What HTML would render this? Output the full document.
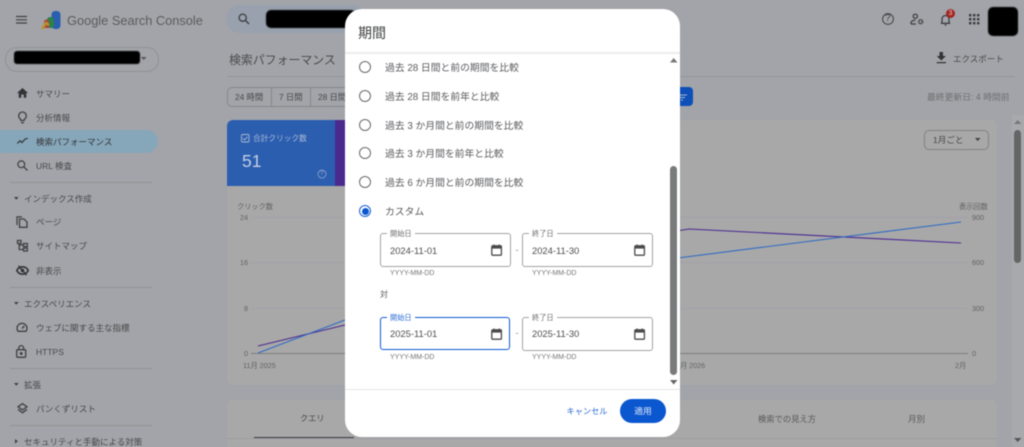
<!DOCTYPE html>
<html lang="ja"><head><meta charset="utf-8"><title>期間</title>
<style>
html,body{margin:0;padding:0;background:#a2a4a9}
#r{position:relative;width:1024px;height:447px;overflow:hidden;background:#a2a4a9;font-family:"Liberation Sans","Noto Sans CJK JP",sans-serif;color:#464749;filter:blur(.45px)}
.a{position:absolute;white-space:nowrap}
.t{position:absolute;white-space:nowrap;line-height:14px;height:14px;font-size:8.5px;color:#47484a;margin-top:.5px}
.blk{position:absolute;background:#000;filter:blur(.6px)}
.dv{position:absolute;left:10px;width:142px;height:1px;background:#8f9195}
svg{position:absolute;overflow:visible}
.ic{fill:none;stroke:#3f4042;stroke-width:1.3}
.rad{position:absolute;left:359px;width:10px;height:10px;border:1.4px solid #6a6a6a;border-radius:50%}
.lab{position:absolute;left:385px;font-size:9.8px;line-height:14px;color:#5a5b5e;white-space:nowrap;margin-top:2px}
.fld{position:absolute;width:129px;height:32px;border:1px solid #a2a3a5;border-radius:3px}
.fl{position:absolute;font-size:7.2px;line-height:9px;color:#6b6c6e;background:#fff;padding:0 3px;white-space:nowrap}
.val{position:absolute;font-size:9.4px;line-height:14px;color:#4c4d4f}
.hint{position:absolute;font-size:7px;line-height:9px;color:#737477}
.ax{position:absolute;white-space:nowrap;font-size:7.2px;line-height:10px;color:#616265;margin-top:.5px}
</style></head><body><div id="r">

<!-- top bar -->
<svg style="left:16px;top:15px" width="12" height="10"><path d="M0 1.5H11M0 4.8H11M0 8H11" stroke="#3f4042" stroke-width="1.2" fill="none"/></svg>
<svg style="left:41px;top:10px" width="20" height="20" viewBox="0 0 20 20">
<rect x="10.5" y="1" width="9" height="18" rx="3.5" fill="#2a5fb0"/>
<rect x="6" y="7" width="7" height="11" rx="3" fill="#2c8048"/>
<path d="M3 12a2.5 2.5 0 0 1 5 0v6H3z" fill="#a9453a"/>
<path d="M1 19 L5 13 L8 15" stroke="#b8942c" stroke-width="2.5" fill="none"/>
</svg>
<div class="a" style="left:67px;top:12px;font-size:12.8px;line-height:18px;color:#5b5c5f">Google Search Console</div>
<div class="a" style="left:226px;top:5px;width:140px;height:28px;border-radius:14px;background:#98a1ad"></div>
<svg style="left:238px;top:13px" width="12" height="12"><circle cx="4.7" cy="4.7" r="3.6" fill="none" stroke="#3f4042" stroke-width="1.3"/><path d="M7.5 7.5L11 11" stroke="#3f4042" stroke-width="1.4"/></svg>
<div class="blk" style="left:266px;top:10px;width:90px;height:18px;border-radius:5px"></div>

<svg style="left:882px;top:13px" width="12" height="12"><circle cx="6" cy="6" r="5.4" fill="none" stroke="#3f4042" stroke-width="1"/></svg>
<div class="a" style="left:885px;top:14px;font-size:10px;line-height:10px;color:#3f4042">?</div>
<svg style="left:910px;top:13px" width="14" height="13" class="ic" viewBox="0 0 14 13"><circle cx="5.3" cy="3.2" r="2.1"/><path d="M1 11v-1.2c0-1.6 2-2.6 4.3-2.6"/><path d="M1 11h5"/><circle cx="10.6" cy="8.7" r="1.9" stroke-width="1.7" stroke-dasharray="1.3 .5"/></svg>
<svg style="left:940px;top:13px" width="12" height="13" class="ic" viewBox="0 0 12 13"><path d="M.8 10.3h9.4M2 10.3V6a3.5 3.5 0 0 1 7 0v4.3M4.5 12h2"/></svg>
<div class="a" style="left:946px;top:9px;width:9px;height:9px;border-radius:50%;background:#a3241f;color:#e8c8c6;font-size:7px;line-height:9px;text-align:center">3</div>
<svg style="left:969px;top:14px" width="11" height="11" fill="#3a3b3d"><rect x="0" y="0" width="2.4" height="2.4"/><rect x="4" y="0" width="2.4" height="2.4"/><rect x="8" y="0" width="2.4" height="2.4"/><rect x="0" y="4" width="2.4" height="2.4"/><rect x="4" y="4" width="2.4" height="2.4"/><rect x="8" y="4" width="2.4" height="2.4"/><rect x="0" y="8" width="2.4" height="2.4"/><rect x="4" y="8" width="2.4" height="2.4"/><rect x="8" y="8" width="2.4" height="2.4"/></svg>
<div class="blk" style="left:988px;top:7px;width:30px;height:29px;border-radius:5px"></div>

<!-- sidebar -->
<div class="a" style="left:5px;top:47px;width:152px;height:23px;border:1px solid #8f9195;border-radius:12px"></div>
<div class="blk" style="left:14px;top:51px;width:126px;height:13px;border-radius:3px"></div>
<svg style="left:141px;top:57px" width="6" height="4"><path d="M0 0H5.5L2.7 3z" fill="#55565a"/></svg>
<div class="a" style="left:0;top:130px;width:158px;height:23px;background:#86a6ba;border-radius:0 12px 12px 0"></div>

<svg style="left:17px;top:88px" width="11" height="10"><path d="M5.5 0L11 5H9.3V9.7H6.7V6.5H4.3V9.7H1.7V5H0z" fill="#333436"/></svg>
<svg style="left:18px;top:111px" width="9" height="13" class="ic" viewBox="0 0 9 13"><path d="M2.8 8.5C1.5 7.6.7 6.3.7 4.8a3.8 3.8 0 0 1 7.6 0c0 1.5-.8 2.8-2.1 3.7V9.5H2.8z"/><path d="M3 11.7h3"/></svg>
<svg style="left:17px;top:138px" width="11" height="6" viewBox="0 0 11 6"><path d="M.3 5.5L3 2.8l2 1.7 3-3.4 2.8-.8" fill="none" stroke="#333436" stroke-width="1.2"/></svg>
<svg style="left:17px;top:160px" width="11" height="11"><circle cx="4.3" cy="4.3" r="3.4" fill="none" stroke="#3f4042" stroke-width="1.2"/><path d="M6.8 6.8L10.5 10.5" stroke="#3f4042" stroke-width="1.3"/></svg>
<svg style="left:16px;top:216px" width="12" height="12" class="ic" viewBox="0 0 12 12"><path d="M1 9V.9h5M3.5 11.3V3H8l3 3v5.3z"/></svg>
<svg style="left:17px;top:240px" width="11" height="12" class="ic" viewBox="0 0 11 12" stroke-width="1"><rect x=".5" y=".5" width="3.5" height="3"/><rect x="6.5" y="3.5" width="3.8" height="3"/><rect x="6.5" y="8" width="3.8" height="3"/><path d="M2.2 3.5V9.5H6.5M2.2 5H6.5"/></svg>
<svg style="left:16px;top:265px" width="13" height="11" viewBox="0 0 13 11"><path d="M.8 5.5C2 3 4 1.8 6.5 1.8S11 3 12.2 5.5C11 8 9 9.2 6.5 9.2S2 8 .8 5.5z" fill="none" stroke="#333436" stroke-width="1.6"/><circle cx="6.5" cy="5.5" r="1.8" fill="#333436"/><path d="M2.5 .8L10.5 10.2" stroke="#333436" stroke-width="1.3"/></svg>
<svg style="left:16px;top:322px" width="12" height="10" class="ic" viewBox="0 0 12 10" stroke-width="1.1"><path d="M2 9.3a5 5 0 1 1 8 0z"/><path d="M6 6.5L8.3 4" stroke-width="1.3"/></svg>
<svg style="left:16px;top:345px" width="11" height="13" class="ic" viewBox="0 0 11 13" stroke-width="1.2"><rect x=".7" y="4.7" width="9" height="7.6" rx="1"/><path d="M2.8 4.7V3a2.4 2.4 0 0 1 4.8 0v1.7"/><circle cx="5.2" cy="8.5" r=".8" fill="#3f4042"/></svg>
<svg style="left:17px;top:403px" width="11" height="11" class="ic" viewBox="0 0 11 11" stroke-width="1"><path d="M5.5 .7L10 3.8 5.5 6.9 1 3.8z"/><path d="M1 6.3L5.5 9.8 10 6.3"/></svg>

<div class="t" style="left:36px;top:86px">サマリー</div>
<div class="t" style="left:36px;top:110px">分析情報</div>
<div class="t" style="left:36px;top:134px;color:#333">検索パフォーマンス</div>
<div class="t" style="left:36px;top:158px">URL 検査</div>
<div class="dv" style="top:182px"></div>
<svg style="left:14px;top:197px" width="5" height="3"><path d="M0 0H4.6L2.3 2.8z" fill="#3f4042"/></svg>
<div class="t" style="left:24px;top:191px">インデックス作成</div>
<div class="t" style="left:36px;top:214px">ページ</div>
<div class="t" style="left:36px;top:238px">サイトマップ</div>
<div class="t" style="left:36px;top:263px">非表示</div>
<div class="dv" style="top:287px"></div>
<svg style="left:14px;top:302px" width="5" height="3"><path d="M0 0H4.6L2.3 2.8z" fill="#3f4042"/></svg>
<div class="t" style="left:24px;top:296px">エクスペリエンス</div>
<div class="t" style="left:36px;top:320px">ウェブに関する主な指標</div>
<div class="t" style="left:36px;top:344px">HTTPS</div>
<div class="dv" style="top:368px"></div>
<svg style="left:14px;top:383px" width="5" height="3"><path d="M0 0H4.6L2.3 2.8z" fill="#3f4042"/></svg>
<div class="t" style="left:24px;top:377px">拡張</div>
<div class="t" style="left:36px;top:401px">パンくずリスト</div>
<div class="dv" style="top:425px"></div>
<svg style="left:15px;top:439px" width="3" height="5"><path d="M0 0V4.6L2.8 2.3z" fill="#3f4042"/></svg>
<div class="t" style="left:24px;top:434px">セキュリティと手動による対策</div>

<!-- main header -->
<div class="a" style="left:229px;top:51px;font-size:11.9px;line-height:18px;color:#4a4b4d">検索パフォーマンス</div>
<div class="a" style="left:227px;top:76px;width:788px;height:1px;background:#939599"></div>
<svg style="left:936px;top:52px" width="11" height="12"><path d="M3.5 0H7V4H10L5.3 8.5.7 4H3.5zM.7 10H10V11.3H.7z" fill="#333436"/></svg>
<div class="t" style="left:953px;top:51.5px">エクスポート</div>
<div class="a" style="left:227px;top:87px;width:130px;height:18px;border:1px solid #85878b;border-radius:5px"></div>
<div class="a" style="left:271px;top:87px;width:1px;height:20px;background:#85878b"></div>
<div class="a" style="left:310px;top:87px;width:1px;height:20px;background:#85878b"></div>
<div class="t" style="left:235px;top:89.5px;font-size:8.3px">24 時間</div>
<div class="t" style="left:279px;top:89.5px;font-size:8.3px">7 日間</div>
<div class="t" style="left:318px;top:89.5px;font-size:8.3px">28 日間</div>
<div class="a" style="left:660px;top:87px;width:33px;height:19px;background:#0e50b8;border-radius:4px"></div>
<svg style="left:680px;top:92px" width="9" height="9"><path d="M0 3H7M0 5.5H5M1 8H3" stroke="#a8b6cc" stroke-width="1"/></svg>
<div class="a" style="left:927px;top:90px;font-size:8.8px;line-height:14px;color:#6e6f72">最終更新日: 4 時間前</div>

<!-- chart card -->
<div class="a" style="left:227px;top:120px;width:770px;height:265px;background:#a8a8a8;border-radius:6px"></div>
<div class="a" style="left:227px;top:120px;width:108px;height:66px;background:#2c5eb0;border-radius:6px 0 0 0"></div>
<div class="a" style="left:335px;top:120px;width:30px;height:66px;background:#4a2a8c"></div>
<svg style="left:241px;top:134px" width="9" height="9"><rect x=".5" y=".5" width="7.5" height="7.5" rx="1" fill="none" stroke="#a9bad6" stroke-width=".9"/><path d="M2 4.3L3.7 6 6.5 2.7" fill="none" stroke="#a9bad6" stroke-width=".9"/></svg>
<div class="a" style="left:253px;top:133px;font-size:7.7px;line-height:12px;color:#a9bad6">合計クリック数</div>
<div class="a" style="left:242px;top:150px;font-size:17.5px;line-height:22px;color:#c2cfe4">51</div>
<svg style="left:317px;top:169px" width="10" height="10"><circle cx="5" cy="5" r="4" fill="none" stroke="#8da4c9" stroke-width=".8"/></svg>
<div class="a" style="left:320px;top:170px;font-size:6.5px;line-height:8px;color:#8da4c9">?</div>

<div class="a" style="left:924px;top:130px;width:63px;height:18px;border:1px solid #808285;border-radius:5px"></div>
<div class="a" style="left:933px;top:134px;font-size:8.6px;line-height:13px;color:#47484a">1月ごと</div>
<svg style="left:975px;top:138px" width="6" height="4"><path d="M0 0H5.5L2.7 3z" fill="#3f4042"/></svg>

<svg style="left:0;top:0" width="1024" height="447">
<path d="M251 217.5H968M251 262.5H968M251 308.5H968" stroke="#a1a2a9" stroke-width="1" fill="none"/>
<path d="M251 353.5H968" stroke="#7d7e80" stroke-width="1"/>
<path d="M258 346L345 325" stroke="#4b2a92" stroke-width="1.1" fill="none"/>
<path d="M258 353L345 320" stroke="#2f6bc4" stroke-width="1.1" fill="none"/>
<path d="M670 232L689 229L961 243" stroke="#4b2a92" stroke-width="1.1" fill="none"/>
<path d="M670 259L961 222" stroke="#2f6bc4" stroke-width="1.1" fill="none"/>
</svg>
<div class="ax" style="left:237px;top:201px">クリック数</div>
<div class="ax" style="left:240px;top:212px">24</div>
<div class="ax" style="left:240px;top:257px">16</div>
<div class="ax" style="left:244px;top:303px">8</div>
<div class="ax" style="left:244px;top:348px">0</div>
<div class="ax" style="left:243px;top:360px">11月 2025</div>
<div class="ax" style="left:959px;top:201px">表示回数</div>
<div class="ax" style="left:972px;top:212px">900</div>
<div class="ax" style="left:972px;top:257px">600</div>
<div class="ax" style="left:972px;top:303px">300</div>
<div class="ax" style="left:972px;top:348px">0</div>
<div class="ax" style="left:680px;top:360px">月 2026</div>
<div class="ax" style="left:955px;top:360px">2月</div>

<!-- table card -->
<div class="a" style="left:227px;top:400px;width:770px;height:60px;background:#a8a8a8;border-radius:6px"></div>
<div class="a" style="left:227px;top:438px;width:770px;height:1px;background:#9c9da3"></div>
<div class="a" style="left:254px;top:436.5px;width:100px;height:1.5px;background:#3a3b3d"></div>
<div class="t" style="left:300px;top:411px;font-size:8.2px">クエリ</div>
<div class="t" style="left:758px;top:411px;font-size:8.3px;color:#58595b">検索での見え方</div>
<div class="t" style="left:908px;top:411px;font-size:8.5px;color:#58595b">月別</div>

<!-- page scrollbar -->
<div class="a" style="left:1012px;top:115px;width:12px;height:332px;background:#a8a9ac"></div>
<svg style="left:1014px;top:120px" width="8" height="5"><path d="M0 4H7.5L3.7 0z" fill="#777"/></svg>
<div class="a" style="left:1014px;top:130px;width:7px;height:133px;background:#646566;border-radius:3.5px"></div>
<svg style="left:1014px;top:438px" width="8" height="5"><path d="M0 0H7.5L3.7 4z" fill="#555"/></svg>

<!-- dialog -->
<div class="a" style="left:345px;top:9px;width:335px;height:428px;background:#fff;border-radius:17px"></div>
<div class="a" style="left:358px;top:23px;font-size:14px;line-height:20px;color:#3f4042">期間</div>
<div class="a" style="left:345px;top:52px;width:335px;height:1.5px;background:#ececec"></div>
<div class="a" style="left:345px;top:389px;width:335px;height:1px;background:#e6e6e6"></div>

<div class="rad" style="top:61px"></div>
<div class="rad" style="top:90px"></div>
<div class="rad" style="top:119px"></div>
<div class="rad" style="top:147px"></div>
<div class="rad" style="top:176px"></div>
<div class="rad" style="top:205px;border-color:#1a5fd0"></div>
<div class="a" style="left:361.6px;top:207.6px;width:7.6px;height:7.6px;border-radius:50%;background:#0b57d0"></div>
<div class="lab" style="top:60px">過去 28 日間と前の期間を比較</div>
<div class="lab" style="top:89px">過去 28 日間を前年と比較</div>
<div class="lab" style="top:118px">過去 3 か月間と前の期間を比較</div>
<div class="lab" style="top:146px">過去 3 か月間を前年と比較</div>
<div class="lab" style="top:175px">過去 6 か月間と前の期間を比較</div>
<div class="lab" style="top:204px">カスタム</div>

<div class="fld" style="left:380px;top:233px"></div>
<div class="fl" style="left:387px;top:229px">開始日</div>
<div class="val" style="left:390px;top:243.5px">2024-11-01</div>
<div class="fld" style="left:522px;top:233px"></div>
<div class="fl" style="left:529px;top:229px">終了日</div>
<div class="val" style="left:532px;top:243.5px">2024-11-30</div>
<div class="hint" style="left:390px;top:269px">YYYY-MM-DD</div>
<div class="hint" style="left:532px;top:269px">YYYY-MM-DD</div>
<div class="a" style="left:515.5px;top:243px;font-size:9px;line-height:14px;color:#8a8a8a">-</div>

<div class="a" style="left:380px;top:289px;font-size:8px;line-height:11px;color:#5a5b5e">対</div>

<div class="fld" style="left:380px;top:317px;width:128px;height:31px;border:1.6px solid #0f5bd2"></div>
<div class="fl" style="left:387px;top:313px;color:#2a6bd6">開始日</div>
<div class="val" style="left:390px;top:327px">2025-11-01</div>
<div class="fld" style="left:522px;top:317px"></div>
<div class="fl" style="left:529px;top:313px">終了日</div>
<div class="val" style="left:532px;top:327px">2025-11-30</div>
<div class="hint" style="left:390px;top:353px">YYYY-MM-DD</div>
<div class="hint" style="left:532px;top:353px">YYYY-MM-DD</div>
<div class="a" style="left:515.5px;top:326px;font-size:9px;line-height:14px;color:#8a8a8a">-</div>

<svg style="left:491px;top:244px" width="12" height="12" viewBox="0 0 12 12"><rect x=".8" y="1.8" width="9.600" height="9.400" rx=".8" fill="none" stroke="#4a4b4d" stroke-width="1.3"/><rect x=".8" y="1.8" width="9.600" height="2.800" fill="#4a4b4d"/><path d="M3 .4V2M8.200 .4V2" stroke="#4a4b4d"/></svg>
<svg style="left:633.5px;top:244px" width="12" height="12" viewBox="0 0 12 12"><rect x=".8" y="1.8" width="9.600" height="9.400" rx=".8" fill="none" stroke="#4a4b4d" stroke-width="1.3"/><rect x=".8" y="1.8" width="9.600" height="2.800" fill="#4a4b4d"/><path d="M3 .4V2M8.200 .4V2" stroke="#4a4b4d"/></svg>
<svg style="left:491px;top:327.5px" width="12" height="12" viewBox="0 0 12 12"><rect x=".8" y="1.8" width="9.600" height="9.400" rx=".8" fill="none" stroke="#4a4b4d" stroke-width="1.3"/><rect x=".8" y="1.8" width="9.600" height="2.800" fill="#4a4b4d"/><path d="M3 .4V2M8.200 .4V2" stroke="#4a4b4d"/></svg>
<svg style="left:633.5px;top:327.5px" width="12" height="12" viewBox="0 0 12 12"><rect x=".8" y="1.8" width="9.600" height="9.400" rx=".8" fill="none" stroke="#4a4b4d" stroke-width="1.3"/><rect x=".8" y="1.8" width="9.600" height="2.800" fill="#4a4b4d"/><path d="M3 .4V2M8.200 .4V2" stroke="#4a4b4d"/></svg>

<svg style="left:670px;top:58px" width="8" height="5"><path d="M0 4.5H7.5L3.7 0z" fill="#777"/></svg>
<div class="a" style="left:670px;top:166px;width:7px;height:209px;background:#797a7b;border-radius:3.5px"></div>
<svg style="left:670px;top:380px" width="8" height="5"><path d="M0 0H7.5L3.7 4.5z" fill="#666"/></svg>

<div class="a" style="left:566.5px;top:405px;font-size:8.2px;line-height:14px;color:#2a6bd0">キャンセル</div>
<div class="a" style="left:620px;top:399px;width:46px;height:24px;border-radius:12px;background:#0b57d0;color:#dfe8f8;font-size:8.8px;line-height:24px;text-align:center">適用</div>

</div></body></html>
